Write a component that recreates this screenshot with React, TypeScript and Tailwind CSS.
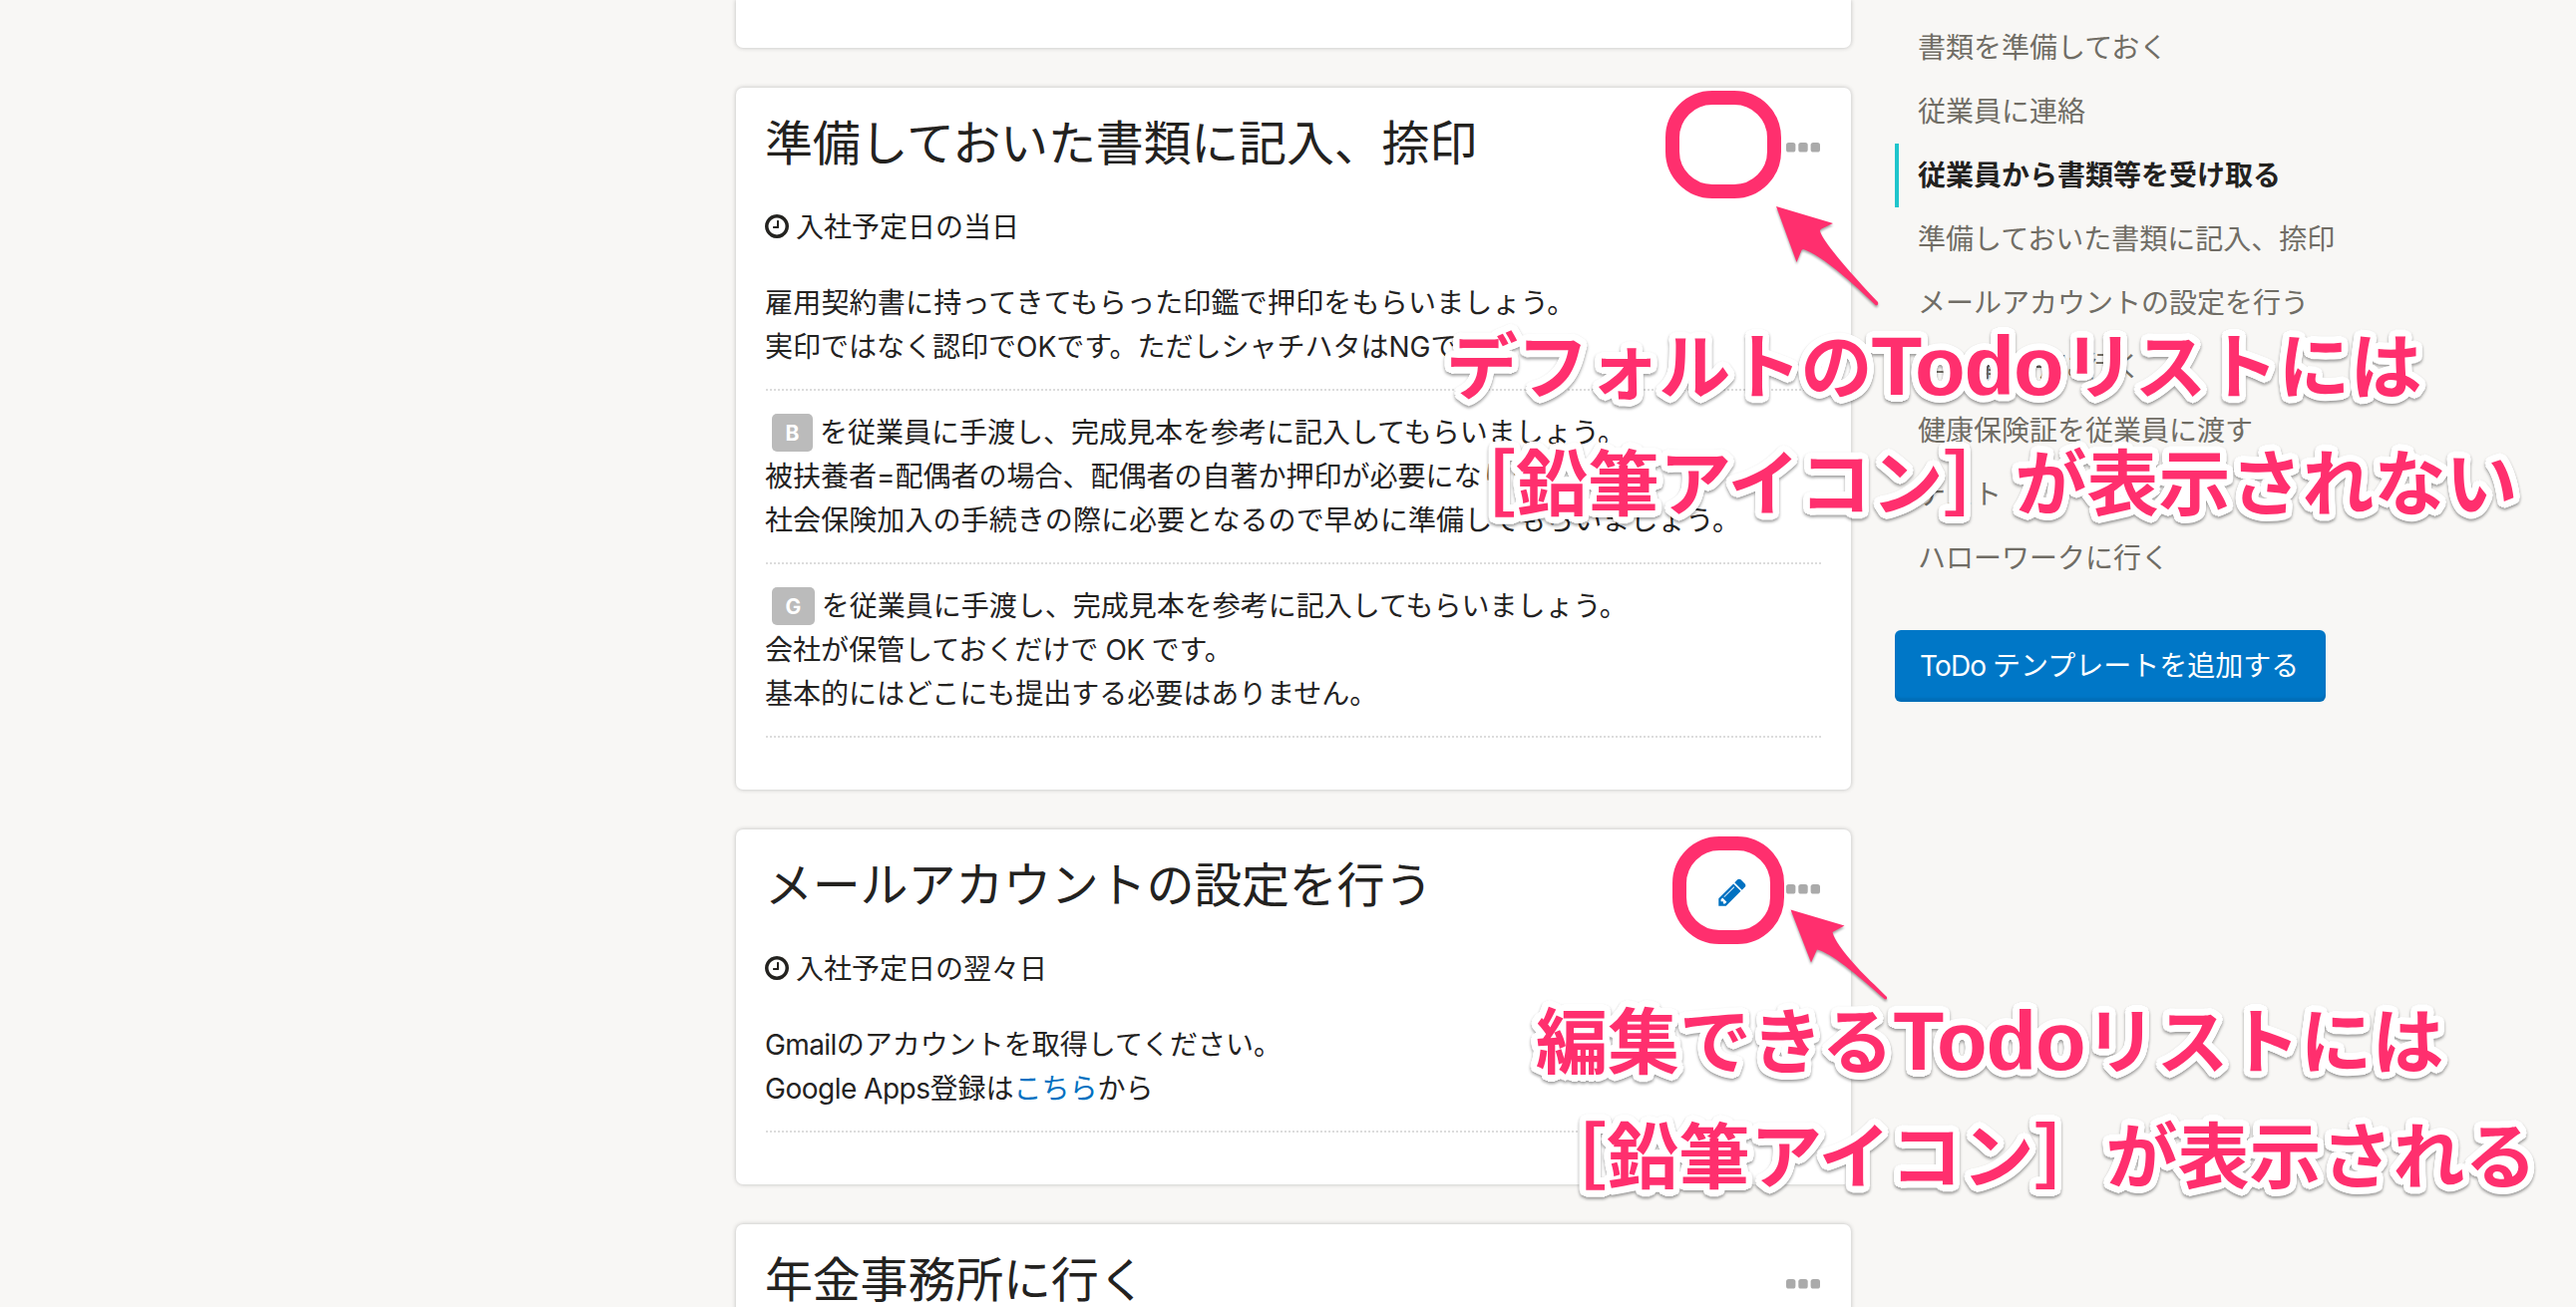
import type { ReactNode } from "react";

const CLOCK =
  "M1024 544v448q0 14-9 23t-23 9h-320q-14 0-23-9t-9-23v-64q0-14 9-23t23-9h224v-352q0-14 9-23t23-9h64q14 0 23 9t9 23zm416 352q0-148-73-273t-198-198-273-73-273 73-198 198-73 273 73 273 198 198 273 73 273-73 198-198 73-273zm224 0q0 209-103 385.5t-279.5 279.5-385.5 103-385.5-103-279.5-279.5-103-385.5 103-385.5 279.5-279.5 385.5-103 385.5 103 279.5 279.5 103 385.5z";
const PENCIL =
  "M491 1536l91-91-235-235-91 91v107h128v128h107zm523-928q0-22-22-22-10 0-17 7l-542 542q-7 7-7 17 0 22 22 22 10 0 17-7l542-542q7-7 7-17zm-54-192l416 416-832 832h-416v-416zm683 96q0 53-37 90l-166 166-416-416 166-165q36-38 90-38 53 0 91 38l235 234q37 39 37 91z";

function Dots() {
  return (
    <svg width="34" height="10" viewBox="0 0 34 10" fill="#aaaaaa">
      <rect x="0" width="9.4" height="9.6" rx="2.6" />
      <rect x="12.3" width="9.4" height="9.6" rx="2.6" />
      <rect x="24.6" width="9.4" height="9.6" rx="2.6" />
    </svg>
  );
}

function Card({ title, when, editable, children }: { title: string; when: string; editable?: boolean; children?: ReactNode }) {
  return (
    <section className="rounded-[7px] bg-white px-[30px] pb-[52px] shadow-[0_0_4px_rgba(51,51,51,0.3)]">
      <header className="flex h-28 items-center justify-between pr-px">
        <h2 className="-ml-px text-[48px] leading-[112px] tracking-[-0.2px]">{title}</h2>
        <div className="flex items-center gap-[38px] pt-2">
          {editable && (
            <svg width="32" height="32" viewBox="0 0 1792 1792" fill="#0071c1" className="mt-1.5">
              <path d={PENCIL} />
            </svg>
          )}
          <Dots />
        </div>
      </header>
      <p className="flex h-[82px] items-start gap-[5px] pt-[6px] leading-[44px]">
        <svg width="28" height="28" viewBox="0 0 1792 1792" fill="currentColor" className="-ml-[3px] mt-[7px]">
          <path d={CLOCK} />
        </svg>
        {when}
      </p>
      {children}
    </section>
  );
}

function Block({ first, children }: { first?: boolean; children: ReactNode }) {
  return (
    <div className={first ? "border-b-2 border-dotted border-[#dcdcdc] pb-5" : "border-b-2 border-dotted border-[#dcdcdc] py-5"}>
      <div className="-ml-px">{children}</div>
    </div>
  );
}

function Badge({ children }: { children: string }) {
  return (
    <span className="ml-[7px] mr-[7px] inline-flex h-[38px] items-center justify-center rounded-[5px] bg-[#bbbbbb] px-[13.5px] text-[21px] font-bold leading-none text-white">
      {children}
    </span>
  );
}

const NAV = [
  "書類を準備しておく",
  "従業員に連絡",
  "従業員から書類等を受け取る",
  "準備しておいた書類に記入、捺印",
  "メールアカウントの設定を行う",
  "年金事務所に行く",
  "健康保険証を従業員に渡す",
  "テスト",
  "ハローワークに行く",
];

// Rounded white outline built from shadows placed around a circle.
function outline(radius: number, steps: number) {
  return Array.from({ length: steps }, (_, i) => {
    const a = (i / steps) * Math.PI * 2;
    return `${(Math.cos(a) * radius).toFixed(2)}px ${(Math.sin(a) * radius).toFixed(2)}px 0 #fff`;
  }).join(", ");
}
const OUTLINE = [outline(6.6, 32), outline(3.5, 12)].join(", ");

function Note({ className, children }: { className: string; children: ReactNode }) {
  return (
    <p
      className={`absolute whitespace-nowrap text-[72px] font-bold leading-[116px] text-[#ff2f6e] drop-shadow-[0_2px_1.5px_rgba(0,0,0,0.38)] ${className}`}
      style={{ textShadow: OUTLINE }}
    >
      {children}
    </p>
  );
}

function Latin({ children }: { children: string }) {
  return <span className="relative top-[1.5px] font-['Liberation_Sans'] text-[83px] leading-none tracking-[-1.2px]">{children}</span>;
}

export default function App() {
  return (
    <div className="relative h-[1311px] w-[2583px] overflow-hidden bg-[#f8f7f5] font-[Inter,'Noto_Sans_CJK_JP',sans-serif] text-[28px] text-[#23221f]">
      <div className="flex items-start gap-[44px] pl-[738px]">
        <main className="flex w-[1118px] flex-col gap-10">
          <div className="h-12 rounded-b-[7px] bg-white shadow-[0_0_4px_rgba(51,51,51,0.3)]" />
          <Card title="準備しておいた書類に記入、捺印" when="入社予定日の当日">
            <Block first>
              <p className="leading-[44px] tracking-[0.2px]">雇用契約書に持ってきてもらった印鑑で押印をもらいましょう。</p>
              <p className="leading-[44px]">実印ではなく認印でOKです。ただしシャチハタはNGです。</p>
            </Block>
            <Block>
              <p className="flex h-11 items-center"><Badge>B</Badge>を従業員に手渡し、完成見本を参考に記入してもらいましょう。</p>
              <p className="leading-[44px]">被扶養者=配偶者の場合、配偶者の自著か押印が必要になります。</p>
              <p className="leading-[44px] tracking-[0.08px]">社会保険加入の手続きの際に必要となるので早めに準備してもらいましょう。</p>
            </Block>
            <Block>
              <p className="flex h-11 items-center"><Badge>G</Badge>を従業員に手渡し、完成見本を参考に記入してもらいましょう。</p>
              <p className="leading-[44px]">会社が保管しておくだけで<span className="tracking-[-0.7px]"> OK </span>です。</p>
              <p className="leading-[44px]">基本的にはどこにも提出する必要はありません。</p>
            </Block>
          </Card>
          <Card title="メールアカウントの設定を行う" when="入社予定日の翌々日" editable>
            <Block first>
              <p className="leading-[44px]"><span className="tracking-[-0.6px]">Gmail</span>のアカウントを取得してください。</p>
              <p className="leading-[44px]"><span className="tracking-[-0.5px]">Google Apps</span>登録は<a className="text-[#0071c1]">こちら</a>から</p>
            </Block>
          </Card>
          <Card title="年金事務所に行く" when="入社予定日の翌々日" />
        </main>
        <aside className="pt-4">
          <nav className="flex flex-col">
            {NAV.map((label, i) => (
              <a
                key={label}
                className={
                  i === 2
                    ? "h-16 border-l-4 border-[#1fc5cc] pl-[19px] font-bold leading-[64px]"
                    : "h-16 border-l-4 border-transparent pl-[19px] leading-[64px] text-[#706d65]"
                }
              >
                {label}
              </a>
            ))}
          </nav>
          <button className="mt-10 flex h-[72px] w-[432px] items-center whitespace-pre rounded-[6px] bg-[#0077c7] pl-[25px] text-white shadow-[inset_0_-4px_2px_rgba(0,0,0,0.08)]">
            <span className="tracking-[-0.9px]">ToDo </span>テンプレートを追加する
          </button>
        </aside>
      </div>

      <div className="absolute left-[1670px] top-[91px] h-[108px] w-[116px] rounded-[47px] border-[14px] border-[#ff2f6e]" />
      <div className="absolute left-[1677px] top-[839px] h-[108px] w-[112px] rounded-[47px] border-[14px] border-[#ff2f6e]" />
      <svg className="absolute left-[1770px] top-[200px] drop-shadow-[0_2px_1px_rgba(0,0,0,0.35)]" width="130" height="120" viewBox="1770 200 130 120" fill="#ff2f6e">
        <path d="M1781 207L1838 224L1826.500 229.500Q1824.500 230.500 1825 232C1828 242 1850 268 1883 303Q1884 307 1880.500 306C1850 276 1822 254 1808 250L1806.500 251L1801.500 263Z" />
      </svg>
      <svg className="absolute left-[1785px] top-[905px] drop-shadow-[0_2px_1px_rgba(0,0,0,0.35)]" width="130" height="120" viewBox="1785 905 130 120" fill="#ff2f6e">
        <path d="M1795.500 912.500L1849.500 928.500L1837.500 935Q1840 946 1862 970C1870 979 1880 988 1892 1000Q1892.500 1003.500 1889.500 1002C1860 976 1836 956 1822 952.500L1816 965.500Z" />
      </svg>

      <Note className="left-[1450px] top-[310px]"><span className="tracking-[-0.9px]">デフォルトの</span><Latin>Todo</Latin>リストには</Note>
      <Note className="left-[1448px] top-[427px]">［鉛筆アイコン］が表示されない</Note>
      <Note className="left-[1540px] top-[987px]">編集できる<Latin>Todo</Latin>リストには</Note>
      <Note className="left-[1539px] top-[1102px]">［鉛筆アイコン］が表示される</Note>
    </div>
  );
}
